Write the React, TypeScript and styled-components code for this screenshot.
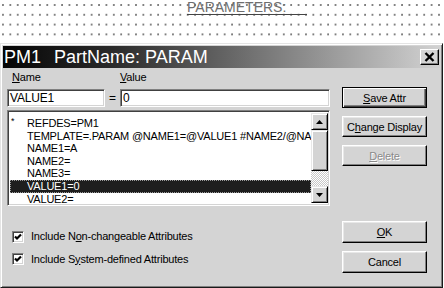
import React from 'react';
import styled, { createGlobalStyle, css } from 'styled-components';

const Global = createGlobalStyle`
  html, body { margin: 0; padding: 0; background: #fff; }
  body { width: 444px; height: 288px; overflow: hidden; font-family: "Liberation Sans", Arial, sans-serif; }
`;

const FACE = '#d4d4d4';

const Page = styled.div`
  width: 444px;
  height: 288px;
  overflow: hidden;
  background-color: #fff;
  background-image: radial-gradient(circle at 1px 1px, #7c7c7c 0.7px, transparent 1.1px);
  background-size: 7.4px 9.8px;
  background-position: 2px 4px;
  display: flex;
  flex-direction: column;
`;

const Canvas = styled.div`
  height: 43px;
  flex: none;
`;

const CanvasLabel = styled.div`
  margin-left: 187px;
  width: 120px;
  height: 14px;
  font-size: 14px;
  line-height: 14px;
  color: #6e6e6e;
  border-bottom: 1px solid #444;
  white-space: nowrap;
`;

const Window = styled.div`
  width: 443px;
  height: 245px;
  box-sizing: border-box;
  background: ${FACE};
  border-style: solid;
  border-width: 1px;
  border-color: #e4e4e4 #1a1a1a #1a1a1a #e4e4e4;
  box-shadow: inset 1px 1px #fff, inset -1px -1px #808080;
  padding: 2px;
  display: flex;
  flex-direction: column;
`;

const TitleBar = styled.div`
  height: 22px;
  flex: none;
  display: flex;
  align-items: center;
  background: linear-gradient(to right, #050505 0%, #2a2a2a 25%, #d2d2d2 100%);
  color: #fff;
  font-size: 18px;
  line-height: 22px;
  padding-left: 1px;
  white-space: nowrap;
`;

const TitlePart = styled.span<{ $gap?: number }>`
  margin-left: ${(p) => p.$gap ?? 0}px;
`;

const CloseBtn = styled.div`
  margin-left: auto;
  margin-right: 1px;
  width: 19px;
  height: 16px;
  box-sizing: border-box;
  background: ${FACE};
  border: 1px solid;
  border-color: #fff #000 #000 #fff;
  box-shadow: inset -1px -1px #808080;
  display: flex;
  align-items: center;
  justify-content: center;
`;

const Body = styled.div`
  flex: 1;
  display: flex;
  padding-left: 4px;
`;

const LeftCol = styled.div`
  width: 323px;
  display: flex;
  flex-direction: column;
  padding-top: 3px;
`;

const FieldGrid = styled.div`
  display: grid;
  grid-template-columns: 98px 15px 210px;
  grid-template-rows: 13px 18px;
  row-gap: 5px;
  align-items: center;
`;

const Label = styled.div<{ $pad?: number }>`
  font-size: 11px;
  letter-spacing: -0.2px;
  line-height: 13px;
  color: #000;
  padding-left: ${(p) => p.$pad ?? 0}px;
`;

const Key = styled.span`
  text-decoration: underline;
`;

const Equals = styled.div`
  font-size: 12px;
  text-align: center;
  color: #000;
`;

const TextBox = styled.div`
  height: 18px;
  box-sizing: border-box;
  background: #fff;
  border: 1px solid;
  border-color: #808080 #fff #fff #808080;
  box-shadow: inset 1px 1px #404040, inset -1px -1px ${FACE};
  font-size: 12px;
  letter-spacing: -0.2px;
  line-height: 16px;
  padding-left: 2px;
  color: #000;
  white-space: nowrap;
  overflow: hidden;
`;

const ListBox = styled.div`
  margin-top: 3px;
  height: 96px;
  box-sizing: border-box;
  background: #fff;
  border: 1px solid;
  border-color: #808080 #fff #fff #808080;
  box-shadow: inset 1px 1px #404040, inset -1px -1px ${FACE};
  padding: 2px 1px 2px 2px;
  display: flex;
`;

const Items = styled.div`
  flex: 1;
  overflow: hidden;
  padding-top: 4px;
`;

const Item = styled.div<{ $selected?: boolean }>`
  height: 12.6px;
  line-height: 12.6px;
  font-size: 11px;
  letter-spacing: -0.2px;
  white-space: nowrap;
  display: flex;
  color: #000;
  ${(p) =>
    p.$selected &&
    css`
      background: #1e1e1e;
      color: #fff;
      outline: 1px dotted #9a9a9a;
      outline-offset: -1px;
    `}
`;

const Marker = styled.span`
  width: 17px;
  flex: none;
  font-size: 9px;
  line-height: 8px;
  padding-left: 1px;
  box-sizing: border-box;
`;

const ScrollBar = styled.div`
  width: 17px;
  flex: none;
  display: flex;
  flex-direction: column;
`;

const Raised = css`
  box-sizing: border-box;
  background: ${FACE};
  border: 1px solid;
  border-color: #e8e8e8 #000 #000 #e8e8e8;
  box-shadow: inset 1px 1px #fff, inset -1px -1px #808080;
`;

const ArrowBtn = styled.div`
  ${Raised};
  height: 17px;
  flex: none;
  display: flex;
  align-items: center;
  justify-content: center;
`;

const Thumb = styled.div`
  ${Raised};
  height: 41px;
  flex: none;
`;

const Track = styled.div`
  flex: 1;
  background-color: #fff;
  background-image: linear-gradient(45deg, #c8c8c8 25%, transparent 25%, transparent 75%, #c8c8c8 75%),
    linear-gradient(45deg, #c8c8c8 25%, transparent 25%, transparent 75%, #c8c8c8 75%);
  background-size: 2px 2px;
  background-position: 0 0, 1px 1px;
`;

const Checks = styled.div`
  margin-top: 24px;
  display: flex;
  flex-direction: column;
  gap: 9.5px;
  padding-left: 5px;
`;

const CheckRow = styled.div`
  height: 13px;
  display: flex;
  align-items: center;
  gap: 7px;
`;

const CheckBox = styled.div`
  width: 12px;
  height: 12px;
  flex: none;
  box-sizing: border-box;
  background: #fff;
  border: 1px solid;
  border-color: #808080 #fff #fff #808080;
  box-shadow: inset 1px 1px #404040, inset -1px -1px ${FACE};
  display: flex;
  align-items: center;
  justify-content: center;
`;

const RightCol = styled.div`
  width: 85px;
  margin-left: 12px;
  padding-top: 19px;
  padding-bottom: 12px;
  display: flex;
  flex-direction: column;
  gap: 8px;
`;

const Spacer = styled.div`
  flex: 1;
  margin-top: -8px;
`;

const Button = styled.div<{ $default?: boolean; $disabled?: boolean; $h?: number }>`
  height: ${(p) => p.$h ?? 21}px;
  flex: none;
  box-sizing: border-box;
  background: ${FACE};
  border: 1px solid;
  border-color: #fff #000 #000 #fff;
  box-shadow: inset -1px -1px #808080, inset 1px 1px #e8e8e8;
  display: flex;
  align-items: center;
  justify-content: center;
  font-size: 11px;
  letter-spacing: -0.2px;
  color: ${(p) => (p.$disabled ? '#8a8a8a' : '#000')};
  text-shadow: ${(p) => (p.$disabled ? '1px 1px #fff' : 'none')};
  ${(p) =>
    p.$default &&
    css`
      border-color: #000;
      box-shadow: inset 1px 1px #fff, inset -1px -1px #404040, inset -2px -2px #808080;
    `}
`;

const items = [
  { mark: '*', text: 'REFDES=PM1' },
  { mark: '', text: 'TEMPLATE=.PARAM @NAME1=@VALUE1 #NAME2/@NAME2=@VALUE2' },
  { mark: '', text: 'NAME1=A' },
  { mark: '', text: 'NAME2=' },
  { mark: '', text: 'NAME3=' },
  { mark: '', text: 'VALUE1=0', selected: true },
  { mark: '', text: 'VALUE2=' },
];

const Tick = () => (
  <svg width="8" height="8" viewBox="0 0 8 8">
    <polyline points="1,3.5 3,5.5 7,1.5" fill="none" stroke="#000" strokeWidth="2.2" />
  </svg>
);

const Up = () => (
  <svg width="7" height="4" viewBox="0 0 7 4">
    <polygon points="3.5,0 7,4 0,4" fill="#000" />
  </svg>
);

const Down = () => (
  <svg width="7" height="4" viewBox="0 0 7 4">
    <polygon points="0,0 7,0 3.5,4" fill="#000" />
  </svg>
);

export default function App() {
  return (
    <>
      <Global />
      <Page>
        <Canvas>
          <CanvasLabel>PARAMETERS:</CanvasLabel>
        </Canvas>
        <Window>
          <TitleBar>
            <TitlePart>PM1</TitlePart>
            <TitlePart $gap={13}>PartName: PARAM</TitlePart>
            <CloseBtn>
              <svg width="11" height="10" viewBox="0 0 11 10">
                <path d="M1.5 1 L9.5 9 M9.5 1 L1.5 9" stroke="#000" strokeWidth="2.4" />
              </svg>
            </CloseBtn>
          </TitleBar>
          <Body>
            <LeftCol>
              <FieldGrid>
                <Label $pad={5}>
                  <Key>N</Key>ame
                </Label>
                <div />
                <Label>
                  <Key>V</Key>alue
                </Label>
                <TextBox>VALUE1</TextBox>
                <Equals>=</Equals>
                <TextBox>0</TextBox>
              </FieldGrid>
              <ListBox>
                <Items>
                  {items.map((it, i) => (
                    <Item key={i} $selected={it.selected}>
                      <Marker>{it.mark}</Marker>
                      {it.text}
                    </Item>
                  ))}
                </Items>
                <ScrollBar>
                  <ArrowBtn>
                    <Up />
                  </ArrowBtn>
                  <Thumb />
                  <Track />
                  <ArrowBtn>
                    <Down />
                  </ArrowBtn>
                </ScrollBar>
              </ListBox>
              <Checks>
                <CheckRow>
                  <CheckBox>
                    <Tick />
                  </CheckBox>
                  <Label>
                    Include N<Key>o</Key>n-changeable Attributes
                  </Label>
                </CheckRow>
                <CheckRow>
                  <CheckBox>
                    <Tick />
                  </CheckBox>
                  <Label>
                    Include S<Key>y</Key>stem-defined Attributes
                  </Label>
                </CheckRow>
              </Checks>
            </LeftCol>
            <RightCol>
              <Button $default>
                <span>
                  <Key>S</Key>ave Attr
                </span>
              </Button>
              <Button>
                <span>
                  C<Key>h</Key>ange Display
                </span>
              </Button>
              <Button $disabled>
                <span>
                  <Key>D</Key>elete
                </span>
              </Button>
              <Spacer />
              <Button $h={22}>
                <span>
                  <Key>O</Key>K
                </span>
              </Button>
              <Button $h={22}>Cancel</Button>
            </RightCol>
          </Body>
        </Window>
      </Page>
    </>
  );
}
